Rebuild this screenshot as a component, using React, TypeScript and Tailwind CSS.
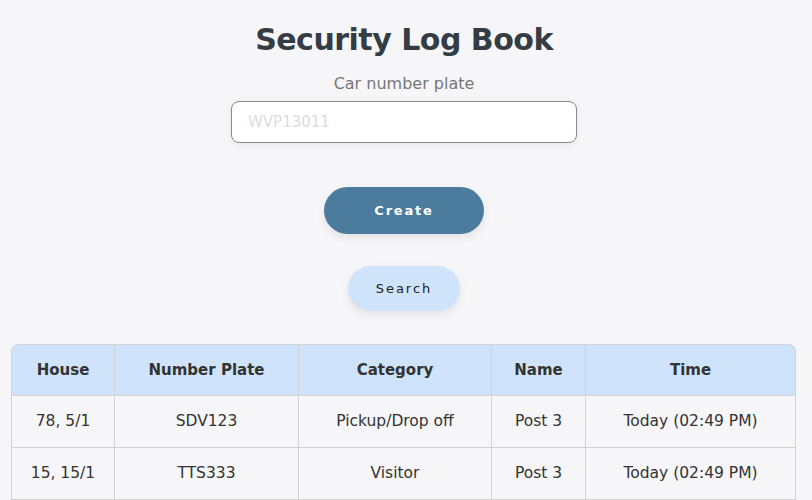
import { useState } from "react"

type Entry = {
    house: string
    plate: string
    category: string
    name: string
    time: string
}

const entries: Entry[] = [
    { house: "78, 5/1", plate: "SDV123", category: "Pickup/Drop off", name: "Post 3", time: "Today (02:49 PM)" },
    { house: "15, 15/1", plate: "TTS333", category: "Visitor", name: "Post 3", time: "Today (02:49 PM)" },
]

const App = () => {
    const [plate, setPlate] = useState<string>("")

    return (
        <div className="min-h-screen bg-[#f6f6f8] text-[#333] font-['DejaVu_Sans',sans-serif]">
            <div className="flex flex-col items-center pt-5 pr-1">
                <h1 className="h-10 leading-10 text-[30px] font-bold text-[#343c44] tracking-[-0.5px]">Security Log Book</h1>
                <label htmlFor="plate" className="mt-[14px] h-5 leading-5 text-[16px] text-[#777]">Car number plate</label>
                <input
                    id="plate"
                    value={plate}
                    onChange={e => setPlate(e.target.value)}
                    placeholder="WVP13011"
                    className="mt-[7px] w-[346px] h-[42px] rounded-lg border border-[#8a8a8a] bg-white px-4 text-[15px] placeholder:text-[#dcdcdc] outline-none shadow-[0_2px_6px_rgba(0,0,0,0.06)]"
                />
                <button className="mt-[44px] w-[160px] h-[47px] rounded-full bg-[#4b7b9d] text-white text-[13px] font-bold tracking-[1.8px] shadow-[0_4px_10px_rgba(0,0,0,0.08)]">
                    Create
                </button>
                <button className="mt-[32px] w-[112px] h-[45px] rounded-full bg-[#cfe4fb] text-[#222] text-[13px] font-medium tracking-[2px] shadow-[0_4px_10px_rgba(0,0,0,0.08)]">
                    Search
                </button>
            </div>
            <div className="mt-[33px] ml-[11px] mr-[16px]">
                <table className="w-full border-separate border-spacing-0 text-[15.5px] text-center">
                    <thead>
                        <tr className="bg-[#cfe4fb] h-[52px] text-[#333] text-[15px]">
                            <th className="w-[104px] font-bold border border-[#d3d3d3] rounded-tl-lg">House</th>
                            <th className="w-[184px] font-bold border-y border-r border-[#d3d3d3]">Number Plate</th>
                            <th className="w-[193px] font-bold border-y border-r border-[#d3d3d3]">Category</th>
                            <th className="w-[94px] font-bold border-y border-r border-[#d3d3d3]">Name</th>
                            <th className="font-bold border-y border-r border-[#d3d3d3] rounded-tr-lg">Time</th>
                        </tr>
                    </thead>
                    <tbody>
                        {entries.map(entry => (
                            <tr key={entry.plate} className="h-[52px]">
                                <td className="border-x border-b border-[#d3d3d3]">{entry.house}</td>
                                <td className="border-r border-b border-[#d3d3d3]">{entry.plate}</td>
                                <td className="border-r border-b border-[#d3d3d3]">{entry.category}</td>
                                <td className="border-r border-b border-[#d3d3d3]">{entry.name}</td>
                                <td className="border-r border-b border-[#d3d3d3]">{entry.time}</td>
                            </tr>
                        ))}
                    </tbody>
                </table>
            </div>
        </div>
    )
}

export default App
